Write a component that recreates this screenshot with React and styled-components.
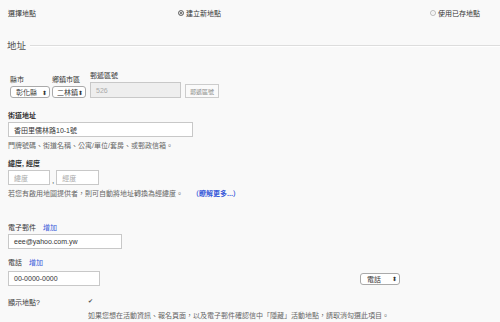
import React from "react";
import styled, { createGlobalStyle } from "styled-components";

const Global = createGlobalStyle`
  html, body { margin: 0; padding: 0; background: #f9f9f9; }
  body {
    font-family: "Liberation Sans", "Noto Sans CJK TC", sans-serif;
    color: #333;
    width: 500px;
    height: 322px;
    overflow: hidden;
  }
`;

const Page = styled.div`
  width: 500px;
  height: 322px;
  background: #f9f9f9;
`;

const ChoiceRow = styled.div`
  display: grid;
  grid-template-columns: 170px 1fr auto;
  align-items: center;
  height: 26px;
  padding: 0 20px 0 8px;
  font-size: 7px;
`;

const Radio = styled.span`
  display: inline-flex;
  align-items: center;
  gap: 2px;
  &::before {
    content: "";
    width: 4px;
    height: 4px;
    border-radius: 50%;
    border: 1px solid ${(p) => (p.checked ? "#777" : "#bbb")};
    background: ${(p) => (p.checked ? "#555" : "#eee")};
    box-shadow: inset 0 0 0 1px #fff;
  }
`;

const Legend = styled.div`
  display: flex;
  align-items: center;
  gap: 4px;
  margin-top: 12px;
  padding-left: 7px;
  font-size: 9.5px;
  color: #555;
  &::after {
    content: "";
    flex: 1;
    height: 1px;
    background: #ddd;
    box-shadow: 0 1px 0 #fff;
  }
`;

const Body = styled.div`
  padding: 18px 0 0 8px;
`;

const Row = styled.div`
  display: flex;
  align-items: ${(p) => p.align || "flex-end"};
  padding-left: ${(p) => p.pl || 0}px;
`;

const Field = styled.div`
  display: flex;
  flex-direction: column;
  gap: ${(p) => p.gap || 2}px;
  margin-right: ${(p) => p.mr || 0}px;
`;

const Label = styled.div`
  font-size: 7px;
  color: #333;
  font-weight: ${(p) => (p.bold ? 700 : 400)};
  display: flex;
  gap: 7px;
  white-space: nowrap;
`;

const Link = styled.span`
  color: #3a5bd9;
  font-weight: ${(p) => (p.bold ? 700 : 400)};
`;

const Select = styled.div`
  display: flex;
  align-items: center;
  justify-content: space-between;
  box-sizing: border-box;
  width: ${(p) => p.w}px;
  height: 12px;
  padding: 0 2px 0 ${(p) => p.pl || 5}px;
  margin-left: ${(p) => p.ml || 0}px;
  border: 1px solid #aaa;
  border-radius: 3px;
  background: #fff;
  font-size: 7px;
  color: #333;
  white-space: nowrap;
  &::after {
    content: "⬍";
    font-size: 6px;
    color: #333;
  }
`;

const Input = styled.div`
  display: flex;
  align-items: center;
  box-sizing: border-box;
  width: ${(p) => p.w}px;
  height: ${(p) => p.h || 15}px;
  padding: 0 5px;
  border: 1px solid #c8c8c8;
  background: ${(p) => (p.disabled ? "#eee" : "#fff")};
  font-size: 7px;
  color: ${(p) => (p.placeholder ? "#aaa" : "#333")};
  white-space: nowrap;
`;

const Button = styled.div`
  display: flex;
  align-items: center;
  justify-content: center;
  box-sizing: border-box;
  width: 34px;
  height: 14px;
  margin-left: 4px;
  border: 1px solid #ccc;
  background: #fafafa;
  font-size: 6px;
  color: #888;
  white-space: nowrap;
`;

const Help = styled.div`
  display: flex;
  gap: 9px;
  font-size: 7px;
  color: #666;
  margin-top: ${(p) => p.mt || 0}px;
  white-space: nowrap;
`;

const Section = styled.div`
  margin-top: ${(p) => p.mt || 0}px;
`;

const Comma = styled.span`
  font-size: 8px;
  padding: 0 2px;
  align-self: flex-end;
`;

const ShowRow = styled.div`
  display: grid;
  grid-template-columns: 80px 1fr;
  margin-top: 11px;
  font-size: 7px;
  row-gap: 3px;
`;

const Check = styled.span`
  font-size: 6px;
  color: #555;
`;

export default function App() {
  return (
    <Page>
      <Global />
      <ChoiceRow>
        <span>選擇地點</span>
        <Radio checked>建立新地點</Radio>
        <Radio>使用已存地點</Radio>
      </ChoiceRow>
      <Legend>地址</Legend>
      <Body>
        <Row pl={2}>
          <Field mr={2}>
            <Label>縣市</Label>
            <Select w={40}>彰化縣</Select>
          </Field>
          <Field mr={4}>
            <Label>鄉鎮市區</Label>
            <Select w={34} pl={4}>二林鎮</Select>
          </Field>
          <Field>
            <Label>郵遞區號</Label>
            <Input w={91} h={16} disabled placeholder>526</Input>
          </Field>
          <Button>郵遞區號</Button>
        </Row>

        <Section mt={12}>
          <Field>
            <Label bold>街道地址</Label>
            <Input w={185}>香田里儒林路10-1號</Input>
          </Field>
          <Help mt={3}>門牌號碼、街道名稱、公寓/單位/套房、或郵政信箱。</Help>
        </Section>

        <Section mt={8}>
          <Field>
            <Label bold>緯度, 經度</Label>
            <Row>
              <Input w={42} placeholder>緯度</Input>
              <Comma>,</Comma>
              <Input w={43} placeholder>經度</Input>
            </Row>
          </Field>
          <Help mt={3}>
            <span>若您有啟用地圖提供者，則可自動將地址轉換為經緯度。</span>
            <Link bold>（瞭解更多...）</Link>
          </Help>
        </Section>

        <Section mt={24}>
          <Field>
            <Label>電子郵件<Link>增加</Link></Label>
            <Input w={114}>eee@yahoo.com.yw</Input>
          </Field>
        </Section>

        <Section mt={8}>
          <Field gap={4}>
            <Label>電話<Link>增加</Link></Label>
            <Row align="center">
              <Input w={92}>00-0000-0000</Input>
              <Select w={40} pl={6} ml={260}>電話</Select>
            </Row>
          </Field>
        </Section>

        <ShowRow>
          <span>顯示地點?</span>
          <Check>✔</Check>
          <span />
          <Help>如果您想在活動資訊、報名頁面，以及電子郵件確認信中「隱藏」活動地點，請取消勾選此項目。</Help>
        </ShowRow>
      </Body>
    </Page>
  );
}
